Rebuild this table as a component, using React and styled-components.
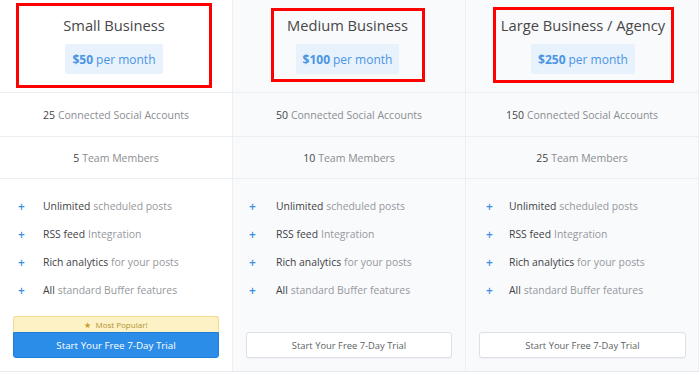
import React from "react";
import styled, { createGlobalStyle } from "styled-components";

const Global = createGlobalStyle`
  html, body { margin: 0; padding: 0; background: #fff; }
  body { font-family: "Open Sans", "Liberation Sans", sans-serif; }
  * { box-sizing: border-box; }
`;

const Table = styled.div`
  display: grid;
  grid-template-columns: 233px 233px 233px;
  width: 699px;
  height: 372px;
  border-bottom: 1px solid #e6e9ed;
`;

const Column = styled.div`
  display: flex;
  flex-direction: column;
  background: ${(p) => (p.$shaded ? "#f9fafc" : "#ffffff")};
  border-right: 1px solid #eceef2;
`;

const Header = styled.div`
  height: 93px;
  flex: none;
  border-bottom: 1px solid #eceef2;
  display: flex;
  justify-content: center;
  align-items: flex-start;
  padding-top: ${(p) => p.$top}px;
`;

const Marked = styled.div`
  border: 3px solid #ff0000;
  width: ${(p) => p.$w}px;
  height: ${(p) => p.$h}px;
  margin-left: ${(p) => p.$shift || 0}px;
  display: flex;
  flex-direction: column;
  align-items: center;
`;

const Title = styled.div`
  font-size: 14.7px;
  color: #474747;
  line-height: 22px;
  margin-top: ${(p) => p.$mt}px;
  margin-bottom: 1px;
  white-space: nowrap;
`;

const Price = styled.div`
  margin-top: 7px;
  height: 30px;
  padding: 0 7px;
  display: flex;
  align-items: center;
  background: #e7f2fd;
  border-radius: 2px;
  font-size: 12px;
  color: #4a94e4;
  b { font-weight: 700; margin-right: 3px; }
`;

const Stat = styled.div`
  height: ${(p) => p.$h}px;
  flex: none;
  border-bottom: 1px solid #eceef2;
  display: flex;
  align-items: center;
  justify-content: center;
  font-size: 10.5px;
  color: #8a8d91;
  b { font-weight: 500; color: #444; margin-right: 3px; }
`;

const Features = styled.ul`
  list-style: none;
  margin: 0;
  padding: 18px 0 0 ${(p) => p.$pad}px;
  display: flex;
  flex-direction: column;
  gap: 10px;
`;

const Feature = styled.li`
  display: flex;
  align-items: center;
  height: 18px;
  font-size: 10.4px;
  color: #95989c;
  b { font-weight: 500; color: #3f4245; margin-right: 3px; }
`;

const Plus = styled.span`
  color: #3a8ee6;
  font-size: 12px;
  font-weight: 600;
  width: ${(p) => p.$w}px;
  flex: none;
`;

const Actions = styled.div`
  margin-top: auto;
  padding: 0 ${(p) => p.$r}px 13px ${(p) => p.$l}px;
  display: flex;
  flex-direction: column;
`;

const Popular = styled.div`
  height: 16px;
  background: #fdf1c6;
  border: 1px solid #f1d98d;
  border-bottom: none;
  border-radius: 3px 3px 0 0;
  display: flex;
  align-items: center;
  justify-content: center;
  gap: 4px;
  font-size: 8px;
  color: #b19431;
  span { color: #c79d1e; font-size: 8px; }
`;

const Button = styled.div`
  height: 26px;
  display: flex;
  align-items: center;
  justify-content: center;
  font-size: ${(p) => (p.$primary ? 9.8 : 9.4)}px;
  border-radius: ${(p) => (p.$primary ? "0 0 3px 3px" : "3px")};
  background: ${(p) => (p.$primary ? "#2b8de7" : "#ffffff")};
  color: ${(p) => (p.$primary ? "#ffffff" : "#5b5f63")};
  border: 1px solid ${(p) => (p.$primary ? "#1f7fd8" : "#dde1e6")};
  box-shadow: ${(p) => (p.$primary ? "none" : "0 1px 1px rgba(0,0,0,0.04)")};
`;

const plans = [
  {
    title: "Small Business",
    price: "$50",
    accounts: "25",
    members: "5",
    shaded: false,
    top: 3,
    box: { w: 196, h: 85, shift: -4, mt: 8 },
    pad: 18,
    plusW: 25,
    act: { l: 13, r: 13 },
    popular: true,
  },
  {
    title: "Medium Business",
    price: "$100",
    accounts: "50",
    members: "10",
    shaded: true,
    top: 8,
    box: { w: 154, h: 74, shift: -3, mt: 3 },
    pad: 16,
    plusW: 27,
    act: { l: 13, r: 13 },
  },
  {
    title: "Large Business / Agency",
    price: "$250",
    accounts: "150",
    members: "25",
    shaded: true,
    top: 7,
    box: { w: 181, h: 76, shift: 2, mt: 4 },
    pad: 20,
    plusW: 23,
    act: { l: 13, r: 12 },
  },
];

export default function App() {
  return (
    <>
      <Global />
      <Table>
        {plans.map((p) => (
          <Column key={p.title} $shaded={p.shaded}>
            <Header $top={p.top}>
              <Marked $w={p.box.w} $h={p.box.h} $shift={p.box.shift}>
                <Title $mt={p.box.mt}>{p.title}</Title>
                <Price>
                  <b>{p.price}</b> per month
                </Price>
              </Marked>
            </Header>
            <Stat $h={44}>
              <b>{p.accounts}</b> Connected Social Accounts
            </Stat>
            <Stat $h={42}>
              <b>{p.members}</b> Team Members
            </Stat>
            <Features $pad={p.pad}>
              <Feature>
                <Plus $w={p.plusW}>+</Plus>
                <b>Unlimited</b> scheduled posts
              </Feature>
              <Feature>
                <Plus $w={p.plusW}>+</Plus>
                <b>RSS feed</b> Integration
              </Feature>
              <Feature>
                <Plus $w={p.plusW}>+</Plus>
                <b>Rich analytics</b> for your posts
              </Feature>
              <Feature>
                <Plus $w={p.plusW}>+</Plus>
                <b>All</b> standard Buffer features
              </Feature>
            </Features>
            <Actions $l={p.act.l} $r={p.act.r}>
              {p.popular && (
                <Popular>
                  <span>★</span> Most Popular!
                </Popular>
              )}
              <Button $primary={p.popular}>Start Your Free 7-Day Trial</Button>
            </Actions>
          </Column>
        ))}
      </Table>
    </>
  );
}
